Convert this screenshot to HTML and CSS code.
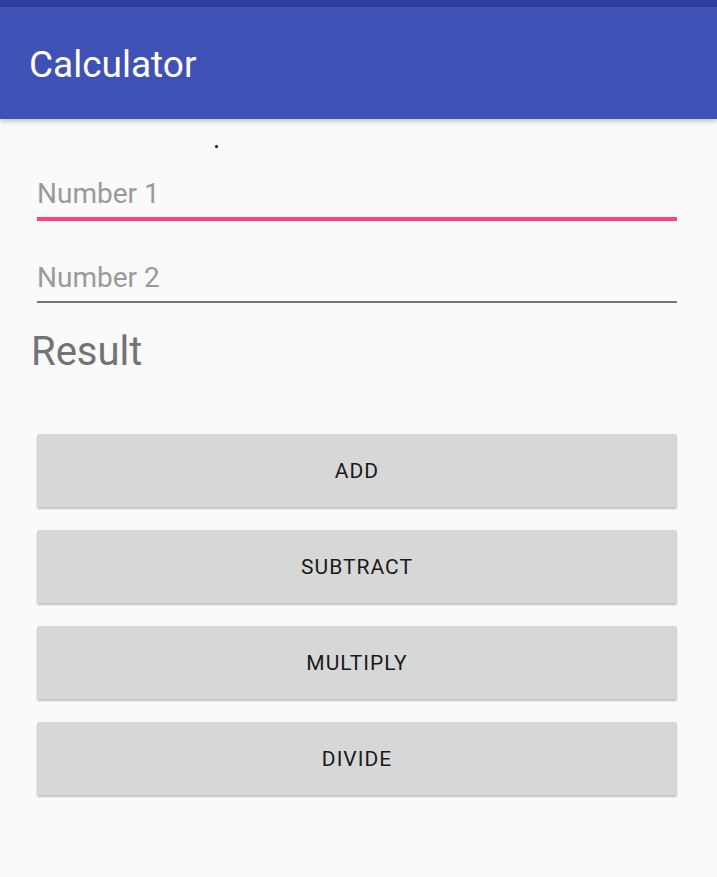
FILE: index.html
```html
<!DOCTYPE html>
<html>
<head>
<meta charset="utf-8">
<link rel="stylesheet" href="styles.css">
</head>
<body>
<div class="status"></div>
<header class="appbar"><h1 class="title">Calculator</h1></header>
<main class="content">
  <div class="dot-row"><span class="dot"></span></div>
  <div class="field focused"><span class="hint">Number 1</span></div>
  <div class="field"><span class="hint">Number 2</span></div>
  <div class="result">Result</div>
  <div class="buttons">
    <button class="btn">ADD</button>
    <button class="btn">SUBTRACT</button>
    <button class="btn">MULTIPLY</button>
    <button class="btn">DIVIDE</button>
  </div>
</main>
</body>
</html>
```
FILE: styles.css
```css
html, body {
  margin: 0;
  padding: 0;
  background: #fafafa;
  font-family: Roboto, "Noto Sans", sans-serif;
}
.status {
  height: 7px;
  background: #303f9f;
}
.appbar {
  height: 112px;
  background: #3f51b5;
  display: flex;
  align-items: center;
  padding-left: 29px;
  box-shadow: 0 2px 5px rgba(0,0,0,0.25);
  position: relative;
}
.title {
  margin: 0;
  color: #fff;
  font-weight: 400;
  font-size: 37px;
  line-height: 44px;
  padding-top: 4px;
}
.content {
  padding: 0 40px 60px 37px;
}
.dot-row {
  height: 56px;
  display: flex;
  align-items: flex-start;
}
.dot {
  width: 3px;
  height: 3px;
  border-radius: 50%;
  background: #000;
  margin: 26px 0 0 178px;
}
.field {
  height: 34px;
  padding-bottom: 8px;
  border-bottom: 2px solid #767676;
}
.field.focused {
  border-bottom: 4px solid #ff4081;
  margin-bottom: 38px;
}
.hint {
  display: block;
  font-size: 28px;
  line-height: 34px;
  padding-top: 2px;
  height: 32px;
  overflow: visible;
  color: #9a9a9a;
}
.result {
  margin: 25px 0 0 -6px;
  font-size: 40px;
  line-height: 48px;
  color: #737373;
}
.buttons {
  margin-top: 58px;
  display: flex;
  flex-direction: column;
  gap: 23px;
}
.btn {
  height: 73px;
  border: none;
  border-radius: 2px;
  background: #d6d7d7;
  box-shadow: 0 2px 2px rgba(0,0,0,0.22);
  font-family: Roboto, "Noto Sans", sans-serif;
  font-size: 21px;
  letter-spacing: 1px;
  color: #1a1a1a;
  padding: 0;
}
```
